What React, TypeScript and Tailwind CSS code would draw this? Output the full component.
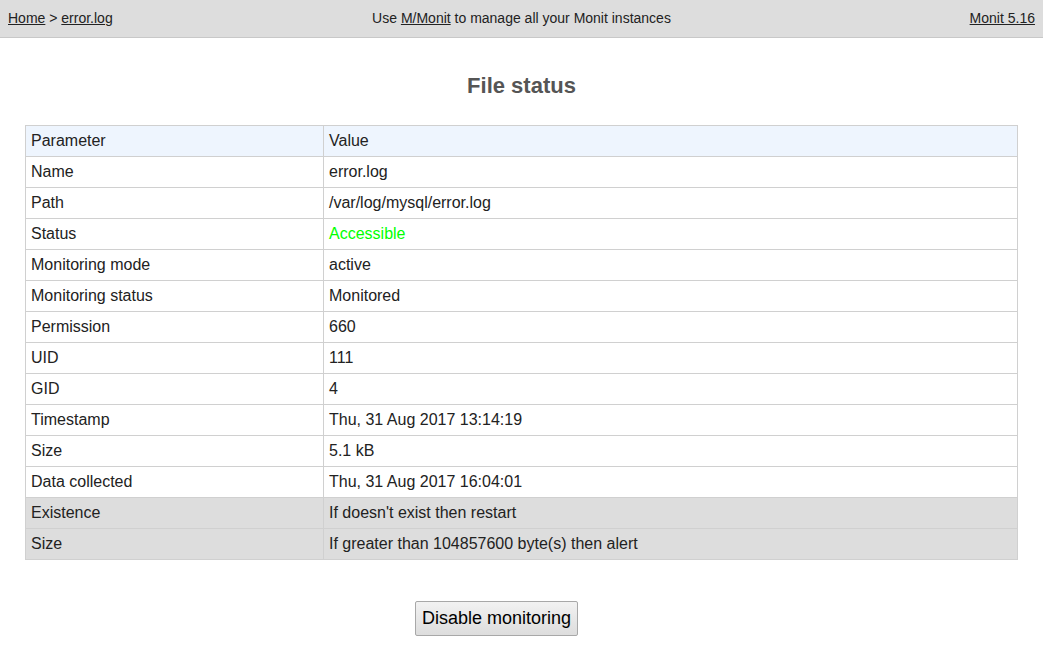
import React from "react";

const rows: { p: string; v: string; cls?: string; gray?: boolean }[] = [
  { p: "Name", v: "error.log" },
  { p: "Path", v: "/var/log/mysql/error.log" },
  { p: "Status", v: "Accessible", cls: "text-[#00ff00]" },
  { p: "Monitoring mode", v: "active" },
  { p: "Monitoring status", v: "Monitored" },
  { p: "Permission", v: "660" },
  { p: "UID", v: "111" },
  { p: "GID", v: "4" },
  { p: "Timestamp", v: "Thu, 31 Aug 2017 13:14:19" },
  { p: "Size", v: "5.1 kB" },
  { p: "Data collected", v: "Thu, 31 Aug 2017 16:04:01" },
  { p: "Existence", v: "If doesn't exist then restart", gray: true },
  { p: "Size", v: "If greater than 104857600 byte(s) then alert", gray: true },
];

export default function App() {
  return (
    <div className="min-h-[670px] bg-white text-[#222] font-['Liberation_Sans',Arial,sans-serif]">
      <div className="flex h-[38px] items-center justify-between border-b border-[#c8c8c8] bg-[#dddddd] px-[8px] text-[14px] text-[#222]">
        <div className="w-[300px]">
          <a className="underline">Home</a> &gt; <a className="underline">error.log</a>
        </div>
        <div>
          Use <a className="underline">M/Monit</a> to manage all your Monit instances
        </div>
        <div className="w-[300px] text-right">
          <a className="underline">Monit 5.16</a>
        </div>
      </div>
      <h1 className="mt-[35px] text-center text-[22px] font-bold leading-[26px] text-[#555]">File status</h1>
      <div className="mt-[26px] px-[25px]">
        <table className="w-full border-collapse text-[16px] leading-[18px]">
          <tbody>
            <tr className="bg-[#eef5fe]">
              <td className="h-[31px] w-[298px] border border-[#d0d0d0] px-[5px] align-middle">Parameter</td>
              <td className="h-[31px] border border-[#d0d0d0] px-[5px] align-middle">Value</td>
            </tr>
            {rows.map((r, i) => (
              <tr key={i} className={r.gray ? "bg-[#dddddd]" : "bg-white"}>
                <td className="h-[31px] border border-[#d0d0d0] px-[5px] align-middle">{r.p}</td>
                <td className={"h-[31px] border border-[#d0d0d0] px-[5px] align-middle " + (r.cls ?? "")}>{r.v}</td>
              </tr>
            ))}
          </tbody>
        </table>
      </div>
      <div className="mt-[41px] flex justify-center pr-[50px]">
        <button className="h-[35px] rounded-[2px] border border-[#a8a8a8] bg-gradient-to-b from-[#f2f2f2] to-[#dddddd] px-[6px] text-[18px] text-black">
          Disable monitoring
        </button>
      </div>
    </div>
  );
}
